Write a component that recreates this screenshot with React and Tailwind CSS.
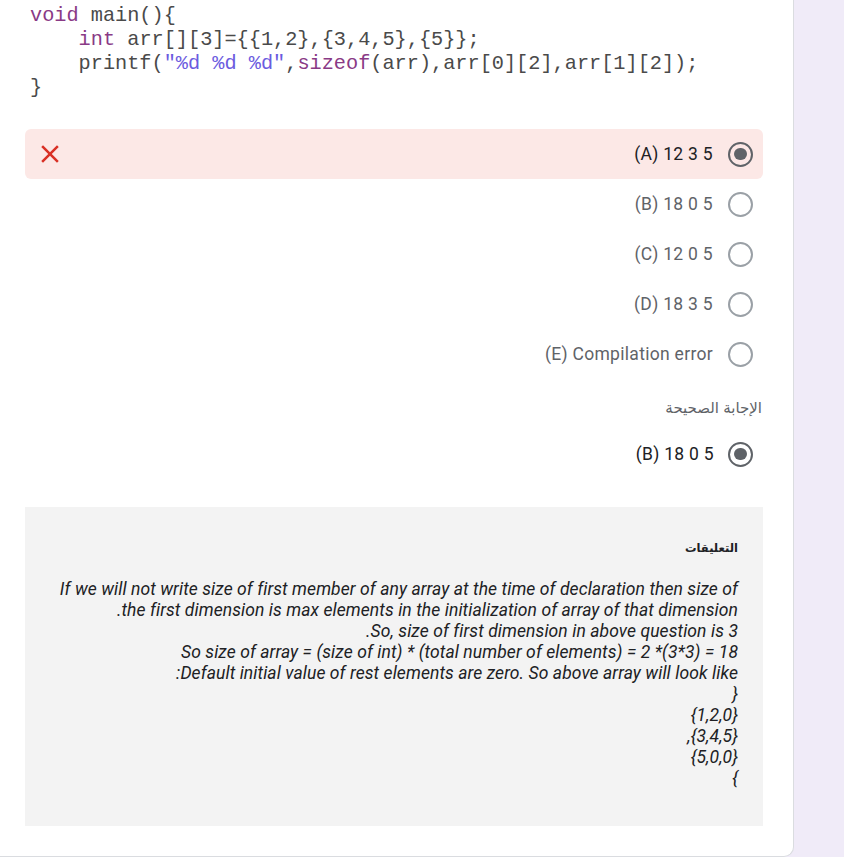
import React from "react";

function Radio({ checked }) {
  return (
    <div
      className={
        checked
          ? "w-[25px] h-[25px] shrink-0 rounded-full border-[2.5px] border-[#5f6368] flex items-center justify-center"
          : "w-[25px] h-[25px] shrink-0 rounded-full border-[2.5px] border-[#9aa0a6]"
      }
    >
      {checked && <div className="w-[12.5px] h-[12.5px] rounded-full bg-[#5f6368]" />}
    </div>
  );
}

function Option({ label, checked, wrong }) {
  return (
    <div
      className={
        wrong
          ? "h-[50px] flex items-center rounded-[6px] bg-[#fce8e6] pl-[10px] pr-[10px]"
          : "h-[50px] flex items-center pl-[10px] pr-[10px]"
      }
    >
      {wrong && (
        <svg width="30" height="30" viewBox="0 0 24 24" className="shrink-0">
          <path
            fill="#d93025"
            d="M19 6.41 17.59 5 12 10.59 6.41 5 5 6.41 10.59 12 5 17.59 6.41 19 12 13.41 17.59 19 19 17.59 13.41 12z"
          />
        </svg>
      )}
      <div className="flex-1" />
      <span
        className={
          checked
            ? "text-[17.5px] tracking-[0.3px] text-[#202124] font-['Roboto',sans-serif] mr-[15px]"
            : "text-[17.5px] tracking-[0.3px] text-[#5f6368] font-['Roboto',sans-serif] mr-[15px]"
        }
      >
        {label}
      </span>
      <Radio checked={checked} />
    </div>
  );
}

const K = ({ children }) => <span className="text-[#8a3a86]">{children}</span>;
const S = ({ children }) => <span className="text-[#6b5be0]">{children}</span>;

const comments = [
  "If we will not write size of first member of any array at the time of declaration then size of",
  ".the first dimension is max elements in the initialization of array of that dimension",
  ".So, size of first dimension in above question is 3",
  "So size of array = (size of int) * (total number of elements) = 2 *(3*3) = 18",
  ":Default initial value of rest elements are zero. So above array will look like",
  "}",
  "{1,2,0}",
  ",{3,4,5}",
  "{5,0,0}",
  "{",
];

export default function App() {
  return (
    <div className="flex min-h-[857px] bg-[#f0ebf8]">
      <div className="w-[794px] h-[857px] shrink-0 bg-white border-r border-b border-[#dadce0] rounded-br-[10px] pl-[25px] pr-[30px] pt-[4px] flex flex-col">
        <div className="ml-[5px] font-['Courier_New','Liberation_Mono',monospace] text-[20.25px] leading-[24px] text-[#4a4a4a] whitespace-pre">
          <div>
            <K>void</K> main(){"{"}
          </div>
          <div>
            {"    "}
            <K>int</K> arr[][3]={"{{1,2},{3,4,5},{5}};"}
          </div>
          <div>
            {"    "}printf(<S>"%d %d %d"</S>,<K>sizeof</K>(arr),arr[0][2],arr[1][2]);
          </div>
          <div>{"}"}</div>
        </div>

        <div className="mt-[29px] flex flex-col">
          <Option label="(A) 12 3 5" checked wrong />
          <Option label="(B) 18 0 5" />
          <Option label="(C) 12 0 5" />
          <Option label="(D) 18 3 5" />
          <Option label="(E) Compilation error" />
        </div>

        <div className="mt-[19px] h-[20px] pr-[1px] text-right text-[15px] leading-[20px] text-[#5f6368] font-['Liberation_Sans','DejaVu_Sans',sans-serif]">
          الإجابة الصحيحة
        </div>

        <div className="mt-[11px] h-[50px] flex items-center justify-end pr-[10px]">
          <span className="text-[17.5px] tracking-[0.3px] text-[#202124] font-['Roboto',sans-serif] mr-[14px]">
            (B) 18 0 5
          </span>
          <Radio checked />
        </div>

        <div className="mt-[28px] h-[319px] bg-[#f3f3f3] pt-[31px] pr-[25px] text-right">
          <div className="text-[11.5px] font-bold leading-[20px] text-[#202124] font-['Liberation_Sans','DejaVu_Sans',sans-serif]">
            التعليقات
          </div>
          <div className="mt-[21px] italic text-[17.5px] tracking-[0.08px] leading-[21px] text-[#202124] font-['Roboto',sans-serif]">
            {comments.map((c, i) => (
              <div key={i} className="whitespace-pre">
                {c}
              </div>
            ))}
          </div>
        </div>
      </div>
    </div>
  );
}
